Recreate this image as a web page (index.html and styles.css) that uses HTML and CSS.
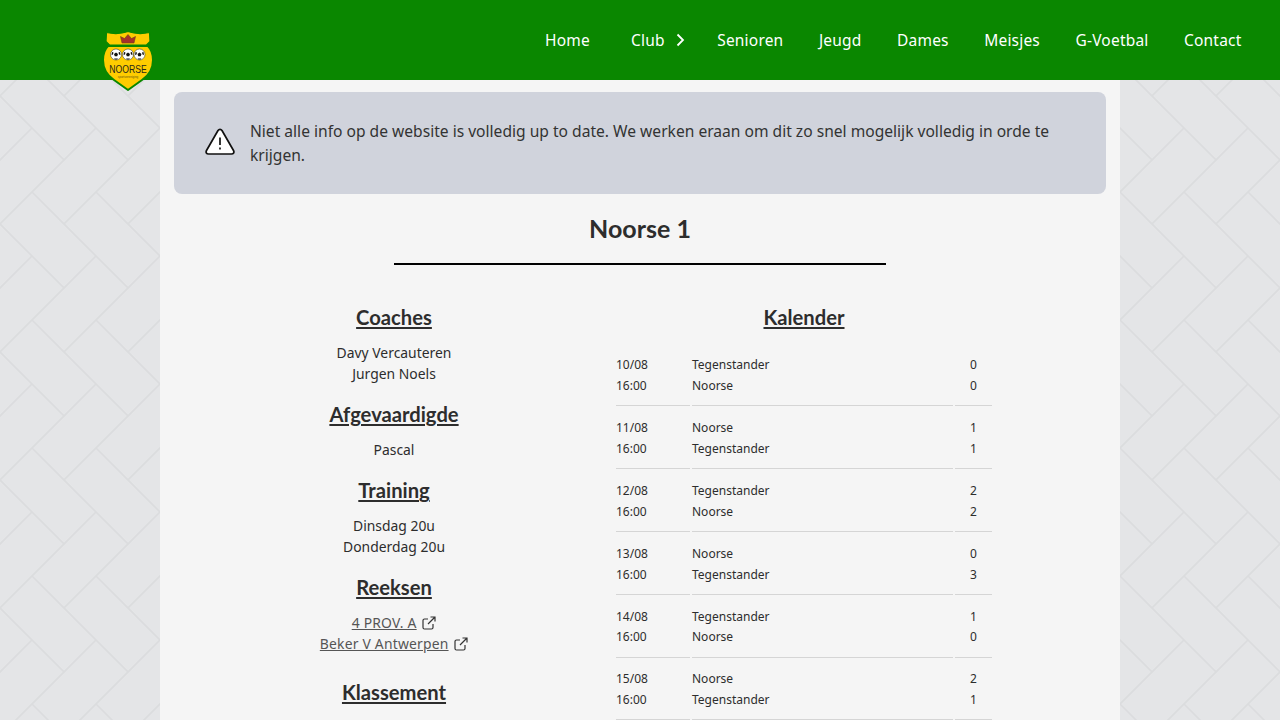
FILE: index.html
```html
<!DOCTYPE html>
<html lang="nl">
<head>
    <meta charset="UTF-8">
    <meta name="viewport" content="width=device-width, initial-scale=1.0">
    <title>Noorse 1</title>
    <link rel="stylesheet" href="styles.css">
</head>
<body>
    <header class="topbar">
        <a class="logo" href="#">
            <svg width="52" height="64" viewBox="-1 -1 52 64">
                <path fill="#ffcc00" stroke="#0a8700" stroke-width="1.200" stroke-linejoin="round" d="M3.500 2.500C10 4 18 4 25 1.500C32 4 40 4 46.500 2.500L47 11.500L43.500 15L6.500 15L3 11.500Z"/>
                <path fill="#ffcc00" stroke="#0a8700" stroke-width="2" stroke-linejoin="round" d="M5 16H45C48 19 50 24 50 30C50 40 45 46 39 50L25 60L11 50C5 46 0 40 0 30C0 24 2 19 5 16Z"/>
                <path fill="#a8302a" stroke="#6b4a1a" stroke-width=".6" d="M19 13L17.500 6.500L21.500 8.500L25 4.500L28.500 8.500L32.500 6.500L31 13Z"/>
                <g class="ball"><circle cx="13" cy="24.500" r="5.500"/><path d="M13 22.500l2 1.500-.8 2.300h-2.400l-.8-2.300zM9 22l1.500.5-.5 2-1.500.500zM17 22l-1.500.5.5 2 1.500.500zM11 28.500h4l-1 1h-2z"/></g>
                <g class="ball"><circle cx="25" cy="24.500" r="5.500"/><path d="M25 22.500l2 1.500-.8 2.300h-2.400l-.8-2.300zM21 22l1.500.5-.5 2-1.500.500zM29 22l-1.500.5.5 2 1.500.500zM23 28.500h4l-1 1h-2z"/></g>
                <g class="ball"><circle cx="36.500" cy="24.500" r="5.500"/><path d="M36.500 22.500l2 1.500-.8 2.300h-2.400l-.8-2.300zM32.500 22l1.500.5-.5 2-1.500.500zM40.500 22l-1.500.5.5 2 1.500.500zM34.500 28.500h4l-1 1h-2z"/></g>
                <text class="logo-name" transform="translate(25 42.500) scale(.96 1.200)" text-anchor="middle">NOORSE</text>
                <text class="logo-small" x="25" y="47.500" text-anchor="middle">sportvereniging</text>
            </svg>
        </a>
        <nav class="menu">
            <a href="#" class="menu-home">Home</a>
            <a href="#" class="menu-club">Club
                <svg width="10" height="14" viewBox="0 0 10 14"><path d="M2.500 1.500L8 7L2.500 12.500" fill="none" stroke="#fff" stroke-width="1.800"/></svg>
            </a>
            <a href="#">Senioren</a>
            <a href="#">Jeugd</a>
            <a href="#">Dames</a>
            <a href="#">Meisjes</a>
            <a href="#">G-Voetbal</a>
            <a href="#">Contact</a>
        </nav>
    </header>

    <main class="panel">
        <div class="alert">
            <svg width="30" height="28" viewBox="0 0 30 28">
                <path fill="#fff" stroke="#111" stroke-width="1.700" stroke-linejoin="round" d="M13 2.500C14 1 16 1 17 2.500L28.500 22.500C29.500 24.500 28.500 26 26.500 26H3.500C1.500 26 .5 24.500 1.500 22.500Z"/>
                <path stroke="#111" stroke-width="1.700" d="M15 9.500V17M15 19.500V21.500"/>
            </svg>
            <p>Niet alle info op de website is volledig up to date. We werken eraan om dit zo snel mogelijk volledig in orde te krijgen.</p>
        </div>

        <h1 class="team-title">Noorse 1</h1>
        <div class="team-rule"></div>

        <div class="columns">
            <section class="info">
                <h2>Coaches</h2>
                <p>Davy Vercauteren<br>Jurgen Noels</p>
                <h2>Afgevaardigde</h2>
                <p>Pascal</p>
                <h2>Training</h2>
                <p>Dinsdag 20u<br>Donderdag 20u</p>
                <h2>Reeksen</h2>
                <p class="links">
                    <a href="#">4 PROV. A</a>
                    <svg class="ext" width="14" height="14" viewBox="0 0 14 14"><path d="M11 8v3.500a1.500 1.500 0 0 1-1.500 1.500h-7A1.500 1.500 0 0 1 1 11.500v-7A1.500 1.500 0 0 1 2.500 3H6M8.500 1H13V5.500M13 1L6 8"/></svg>
                    <br>
                    <a href="#">Beker V Antwerpen</a>
                    <svg class="ext" width="14" height="14" viewBox="0 0 14 14"><path d="M11 8v3.500a1.500 1.500 0 0 1-1.500 1.500h-7A1.500 1.500 0 0 1 1 11.500v-7A1.500 1.500 0 0 1 2.500 3H6M8.500 1H13V5.500M13 1L6 8"/></svg>
                </p>
                <h2 class="standing">Klassement</h2>
            </section>

            <section class="calendar">
                <h2>Kalender</h2>
                <table>
                    <tr><td class="c-date">10/08<br>16:00</td><td>Tegenstander<br>Noorse</td><td class="c-score">0<br>0</td></tr>
                    <tr><td class="c-date">11/08<br>16:00</td><td>Noorse<br>Tegenstander</td><td class="c-score">1<br>1</td></tr>
                    <tr><td class="c-date">12/08<br>16:00</td><td>Tegenstander<br>Noorse</td><td class="c-score">2<br>2</td></tr>
                    <tr><td class="c-date">13/08<br>16:00</td><td>Noorse<br>Tegenstander</td><td class="c-score">0<br>3</td></tr>
                    <tr><td class="c-date">14/08<br>16:00</td><td>Tegenstander<br>Noorse</td><td class="c-score">1<br>0</td></tr>
                    <tr><td class="c-date">15/08<br>16:00</td><td>Noorse<br>Tegenstander</td><td class="c-score">2<br>1</td></tr>
                </table>
            </section>
        </div>
    </main>
</body>
</html>
```

FILE: styles.css
```css
html{
    background-color: #e4e5e7;
    background-image: url("data:image/svg+xml,%3Csvg xmlns='http://www.w3.org/2000/svg' width='64' height='128'%3E%3Cpath fill='none' stroke='%23dbdcde' stroke-width='1.6' d='M32 64L128 160M-32 64L64 160M-96 64L0 160M32 -64L128 32M-32 -64L64 32M-96 -64L0 32M64 96L160 0M0 96L96 0M-64 96L32 0'/%3E%3C/svg%3E");
}
body{
    font-family: "Noto Sans", sans-serif;
    color: #2d2d2d;
    margin: 0;
    padding: 0;
}
.topbar{
    position: relative;
    z-index: 2;
    display: flex;
    justify-content: space-between;
    height: 80px;
    background-color: #0a8700;
    padding-left: 102px;
    padding-right: 38.500px;
}
.logo{
    display: block;
    width: 52px;
    height: 64px;
    margin-top: 29px;
}
.ball circle{
    fill: #fff;
    stroke: #222;
    stroke-width: .5;
}
.ball path{
    fill: #111;
}
.logo-name{
    font-family: "Liberation Sans", sans-serif;
    font-size: 9px;
    fill: #26261a;
}
.logo-small{
    font-family: "Liberation Sans", sans-serif;
    font-size: 3px;
    fill: #6b5a10;
}
.menu{
    display: flex;
    align-items: center;
    gap: 35.500px;
}
.menu a{
    color: #fff;
    font-size: 15.500px;
    letter-spacing: .2px;
    text-decoration: none;
}
.menu-home{
    margin-right: 5.500px;
}
.menu-club{
    display: flex;
    align-items: center;
    gap: 10px;
    margin-right: -3px;
}
.panel{
    width: 932px;
    margin: 0 auto;
    padding: 12px 14px 0;
    background-color: #f5f5f5;
}
.alert{
    display: flex;
    align-items: center;
    gap: 15px;
    height: 102px;
    box-sizing: border-box;
    padding: 0 30px 0 31px;
    background-color: #d0d3dc;
    border-radius: 8px;
}
.alert svg{
    flex: none;
    margin-bottom: 3px;
}
.alert p{
    margin: 0;
    font-size: 15.600px;
    line-height: 24px;
    color: #333;
}
.team-title{
    font-family: Lato, sans-serif;
    font-size: 25px;
    line-height: 30px;
    font-weight: 700;
    text-align: center;
    margin: 19px 0 20px;
}
.team-rule{
    width: 492px;
    height: 2px;
    margin: 0 auto;
    background-color: #000;
}
.columns{
    display: flex;
    padding-left: 14px;
    margin-top: 39px;
}
.info{
    width: 412px;
    text-align: center;
}
.calendar{
    width: 376px;
    margin-left: 16px;
    text-align: center;
}
h2{
    font-family: Lato, sans-serif;
    font-size: 20.200px;
    line-height: 26px;
    font-weight: 700;
    text-decoration: underline;
    margin: 0;
}
.info p{
    font-size: 13.900px;
    line-height: 20.8px;
    margin: 13px 0 16.500px;
}
.links a{
    color: #555;
    letter-spacing: .2px;
}
.ext{
    fill: none;
    stroke: #333;
    stroke-width: 1.2;
    margin-left: 2px;
    vertical-align: -2px;
}
.standing{
    margin-top: 24px;
}
table{
    margin-top: 13.200px;
    border-spacing: 2px;
    border-collapse: separate;
    margin-left: -2px;
    width: 380px;
    text-align: left;
}
td{
    font-size: 12px;
    line-height: 20.8px;
    padding: 9.900px 0 8.400px;
    border-bottom: 1px solid #d5d5d5;
}
.c-date{
    width: 74px;
}
.c-score{
    width: 37px;
    text-align: center;
}
```
